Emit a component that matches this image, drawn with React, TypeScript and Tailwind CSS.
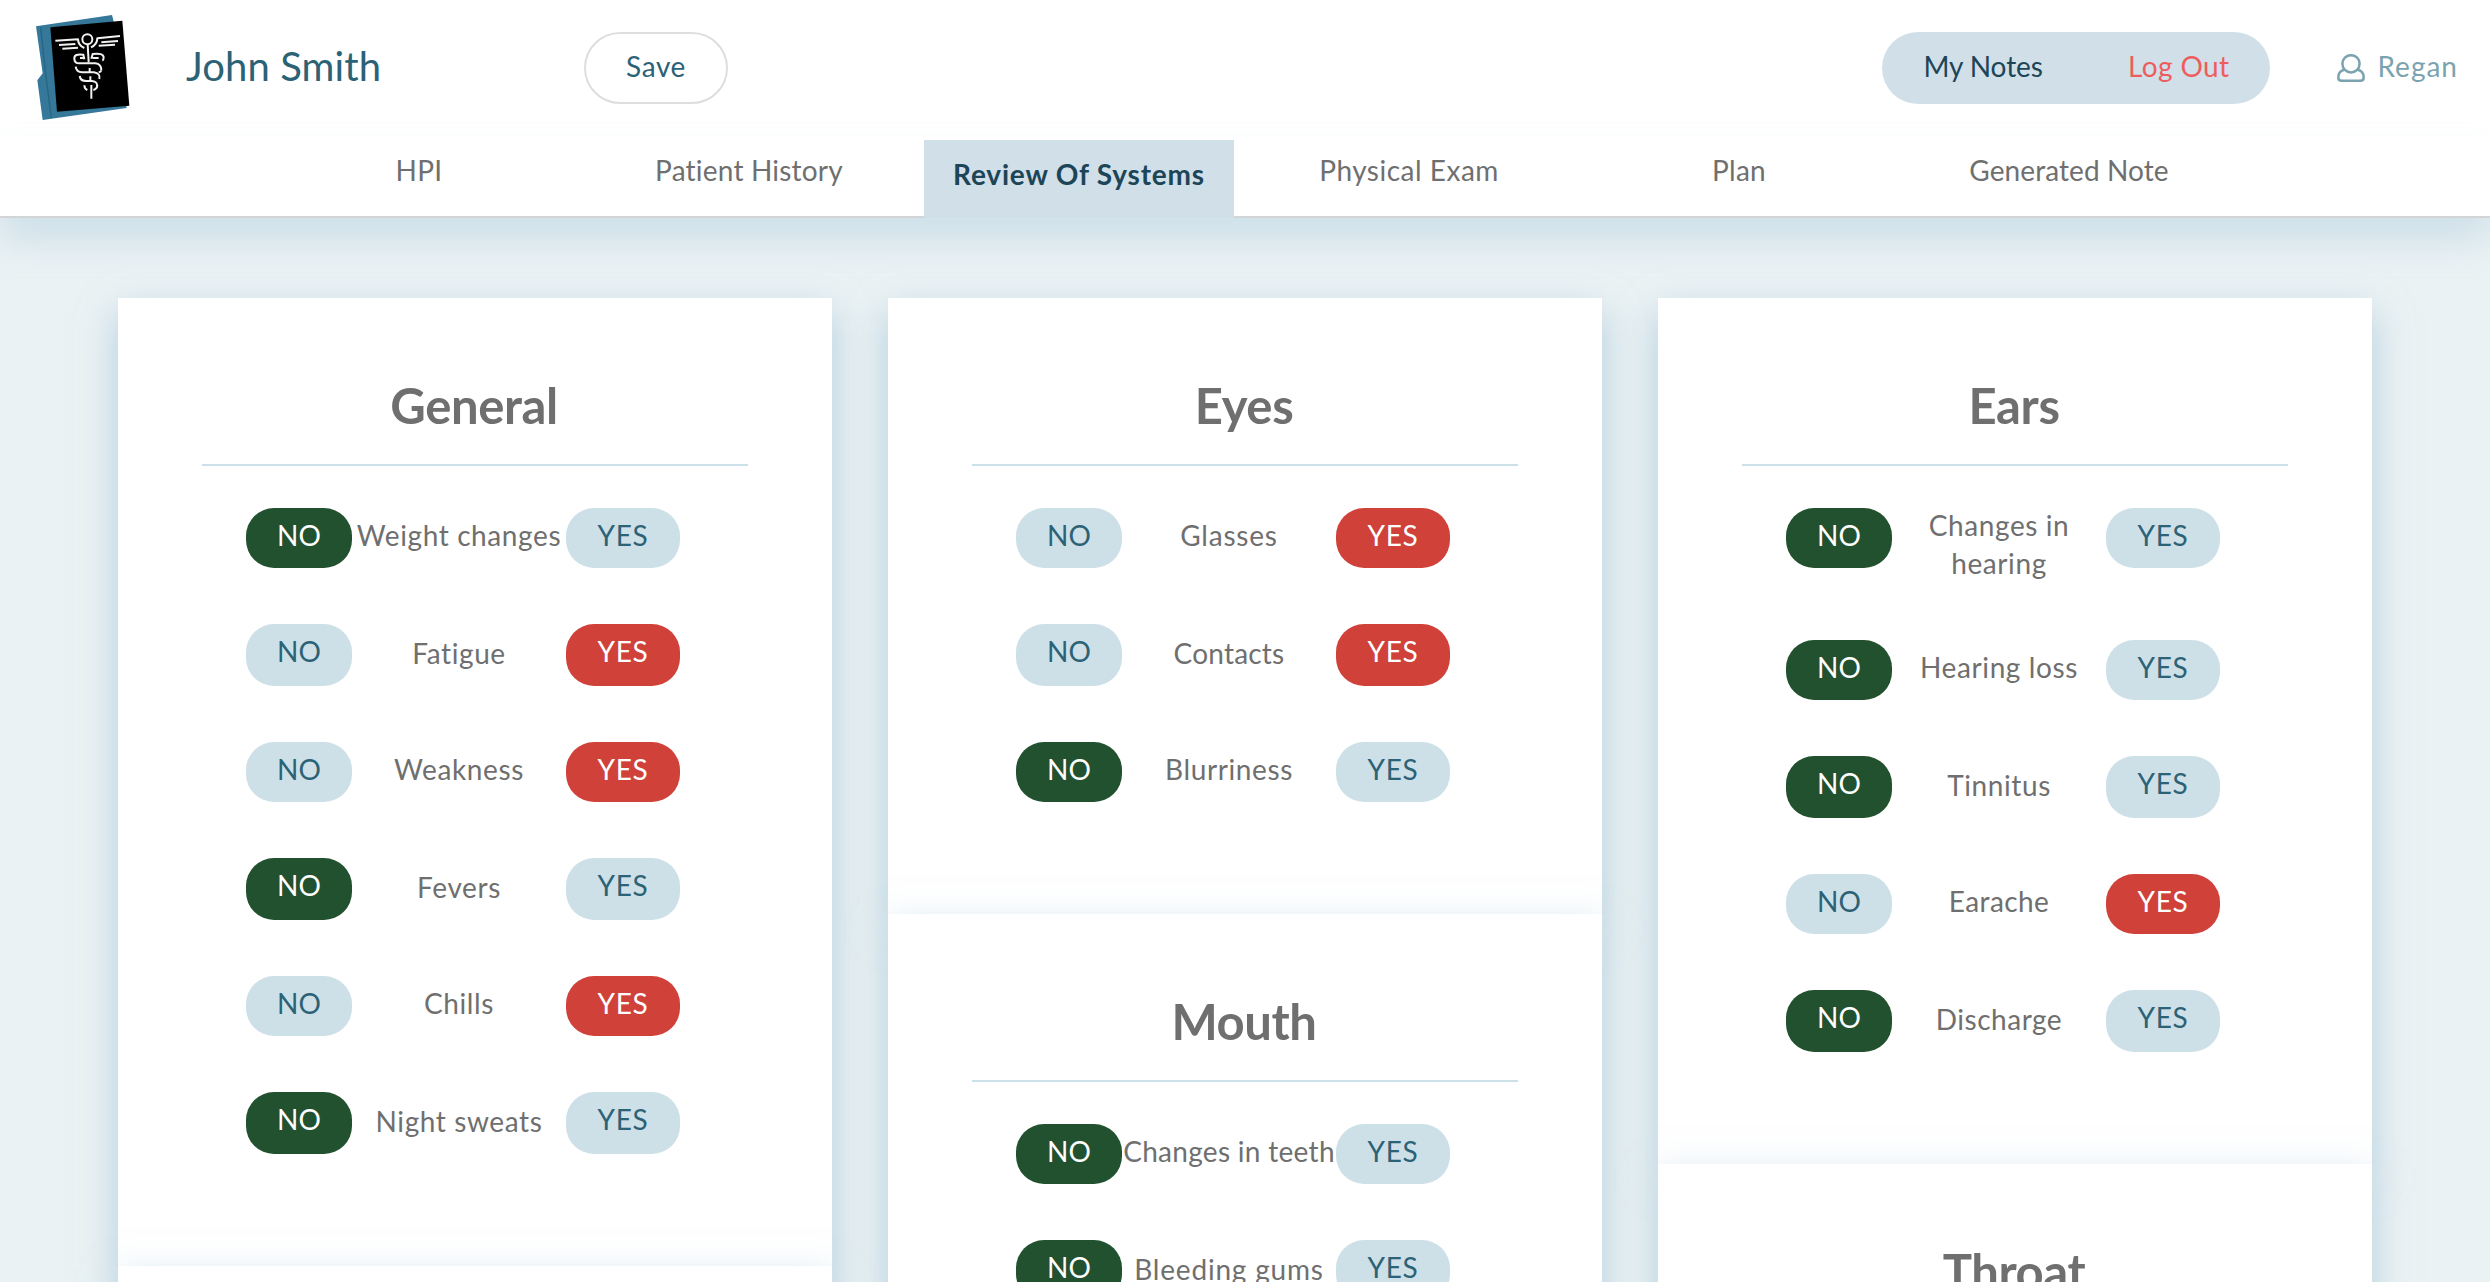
import { ReactNode } from "react";

type Answer = "no" | "yes";
type Item = { label: ReactNode; answer: Answer; tall?: boolean; tracking?: string };

const GENERAL: Item[] = [
  { label: "Weight changes", answer: "no" },
  { label: "Fatigue", answer: "yes" },
  { label: "Weakness", answer: "yes" },
  { label: "Fevers", answer: "no" },
  { label: "Chills", answer: "yes" },
  { label: "Night sweats", answer: "no" },
];

const EYES: Item[] = [
  { label: "Glasses", answer: "yes", tracking: "tracking-[0.8px]" },
  { label: "Contacts", answer: "yes", tracking: "tracking-[0.2px]" },
  { label: "Blurriness", answer: "no" },
];

const MOUTH: Item[] = [
  { label: "Changes in teeth", answer: "no", tracking: "tracking-[0.3px]" },
  { label: "Bleeding gums", answer: "no", tracking: "tracking-[0.8px]" },
];

const EARS: Item[] = [
  {
    label: (
      <>
        Changes in
        <br />
        hearing
      </>
    ),
    answer: "no",
    tall: true,
  },
  { label: "Hearing loss", answer: "no" },
  { label: "Tinnitus", answer: "no" },
  { label: "Earache", answer: "yes", tracking: "tracking-[0.4px]" },
  { label: "Discharge", answer: "no", tracking: "tracking-[0.5px]" },
];

const TABS = [
  { name: "HPI", tracking: "tracking-[0.3px]" },
  { name: "Patient History", tracking: "tracking-[0.2px]" },
  { name: "Review Of Systems", tracking: "tracking-[0.8px]", active: true },
  { name: "Physical Exam", tracking: "tracking-[0.5px]" },
  { name: "Plan", tracking: "tracking-[0.3px]" },
  { name: "Generated Note", tracking: "tracking-[0.1px]" },
];

function Logo() {
  return (
    <svg className="ml-[30px] h-[116px] w-[108px] shrink-0" viewBox="0 0 324 348" fill="none">
      <path d="M18 55 L246 21 L250 36 L290 300 L38 336 L22 217 L38 196 Z" fill="#35789a" />
      <path d="M32 58 L46 190 L64 330" stroke="#286580" strokeWidth="4" />
      <path d="M61 58 L277 38 L298 293 L81 311 Z" fill="#000" />
      <g stroke="#f2f2f0" strokeWidth="6" strokeLinejoin="round">
        <circle cx="172" cy="94" r="15" />
        <path d="M76 98 L144 94 Q145 112 163 120 M87 111 L136 108 M97 122 L144 119" />
        <path d="M270 84 L202 91 Q201 110 183 118 M264 99 L214 103 M255 110 L206 113" />
        <path d="M173 110 L176 163" />
        <path d="M163 154 L160 140 Q132 136 133 152 Q133 166 148 166 H196 Q214 168 214 187" />
        <path d="M163 150 H150" />
        <path d="M184 152 L188 138 Q220 134 221 148 Q221 156 217 158 M188 150 H206" />
        <path d="M137 176 Q139 192 156 193 H192 Q212 196 208 213" />
        <path d="M149 204 Q151 219 168 219 H186 Q204 220 201 238 Q196 245 190 246" />
        <path d="M214 187 Q212 192 206 193 M163 232 Q163 242 172 246" />
        <path d="M179 180 V193 M181 205 V219 M184 231 V272" />
      </g>
    </svg>
  );
}

function UserIcon() {
  return (
    <svg className="h-7 w-7" viewBox="0 0 28 28" fill="none" stroke="#7ba3af" strokeWidth="2.5">
      <circle cx="14" cy="9.8" r="8.6" />
      <path d="M7.6 15.8 C3.6 16.6 1.3 19.6 1.3 23.4 Q1.3 26.7 4.6 26.7 H23.4 Q26.7 26.7 26.7 23.4 C26.7 19.6 24.4 16.6 20.4 15.8" />
    </svg>
  );
}

function Header() {
  return (
    <header className="flex h-[136px] items-start bg-white">
      <div className="pt-2">
        <Logo />
      </div>
      <div className="ml-12 w-[398px] pt-[41px] text-[40px] leading-[50px] tracking-[0.1px] text-[#2c6275]">
        John Smith
      </div>
      <button className="mt-8 h-[72px] w-[144px] rounded-[36px] border-2 border-[#dedede] bg-white pb-[4px] text-[28px] tracking-[0.6px] text-[#2c6275]">
        Save
      </button>
      <div className="mt-8 ml-auto flex h-[72px] w-[388px] justify-between rounded-[36px] bg-[#d1dfe8] px-[41px] pt-[15px] leading-[38px]">
        <span className="tracking-[-0.1px] text-[#1c4557]">My Notes</span>
        <span className="tracking-[0.4px] text-[#ee5d5d]">Log Out</span>
      </div>
      <div className="mt-[47px] mr-[32px] ml-[67px] flex leading-[38px] text-[#7ba3af]">
        <div className="-mt-px pt-2 pr-3">
          <UserIcon />
        </div>
        <span className="tracking-[1px]">Regan</span>
      </div>
    </header>
  );
}

function Nav() {
  return (
    <nav className="relative flex h-[82px] justify-center border-b-2 border-[#d2d4d6] bg-white pr-[2px] shadow-[0_23px_36px_rgba(123,173,204,0.26)]">
      {TABS.map((t) =>
        t.active ? (
          <div
            key={t.name}
            className={`mx-[10px] mt-1 h-[78px] w-[310px] bg-[#d1dfe8] pt-[15px] text-center leading-[38px] font-bold text-[#1c4557] ${t.tracking}`}
          >
            {t.name}
          </div>
        ) : (
          <div key={t.name} className={`w-[330px] pt-[15px] text-center leading-[38px] text-[#6f6f6f] ${t.tracking}`}>
            {t.name}
          </div>
        ),
      )}
    </nav>
  );
}

function Row({ item, odd }: { item: Item; odd: boolean }) {
  const h = odd ? "h-[62px]" : "h-[60px]";
  const idle = "bg-[#cde0e8] text-[#2c6275]";
  const labelPad = item.tall ? "-mt-[2px]" : odd ? "pt-[10px]" : "pt-2";
  return (
    <div className={`flex items-start ${item.tall ? "h-[76px]" : h}`}>
      <button
        className={`${h} flex w-[106px] items-start justify-center rounded-[28px] pt-2 leading-[38px] ${item.answer === "no" ? "bg-[#21512e] text-white" : idle}`}
      >
        NO
      </button>
      <div
        className={`w-[214px] text-center leading-[38px] whitespace-nowrap text-[#6f6f6f] ${labelPad} ${item.tracking ?? "tracking-[0.6px]"}`}
      >
        {item.label}
      </div>
      <button
        className={`${h} flex w-[114px] items-start justify-center rounded-[28px] pt-2 leading-[38px] tracking-[0.7px] ${item.answer === "yes" ? "bg-[#d0413a] text-white" : idle}`}
      >
        YES
      </button>
    </div>
  );
}

function Card({ title, items, height }: { title: string; items: Item[]; height: string }) {
  const startsTall = !!items[0]?.tall;
  return (
    <section className={`w-[714px] shrink-0 bg-white px-[84px] shadow-[0_15px_36px_rgba(123,173,204,0.5)] ${height}`}>
      <h2 className="h-[168px] border-b-2 border-[#cbe0e8] pt-[77px] pr-[2px] text-center text-[49px] leading-[60px] font-bold tracking-[-0.4px] text-[#6f6f6f]">
        {title}
      </h2>
      <div className="flex flex-col gap-14 pt-[42px] pl-11">
        {items.map((item, i) => (
          <Row key={i} item={item} odd={startsTall ? i > 1 && i % 2 === 0 : i % 2 === 1} />
        ))}
      </div>
    </section>
  );
}

export default function App() {
  return (
    <div className="h-[1282px] overflow-hidden bg-[#ebf2f4] font-['Lato',sans-serif] text-[28px]">
      <Header />
      <Nav />
      <main className="flex justify-center gap-14 pt-20">
        <div>
          <Card title="General" items={GENERAL} height="h-[968px]" />
          <Card title="" items={[]} height="h-[400px]" />
        </div>
        <div>
          <Card title="Eyes" items={EYES} height="h-[616px]" />
          <Card title="Mouth" items={MOUTH} height="h-[616px]" />
        </div>
        <div>
          <Card title="Ears" items={EARS} height="h-[866px]" />
          <Card title="Throat" items={[]} height="h-[500px]" />
        </div>
      </main>
    </div>
  );
}
